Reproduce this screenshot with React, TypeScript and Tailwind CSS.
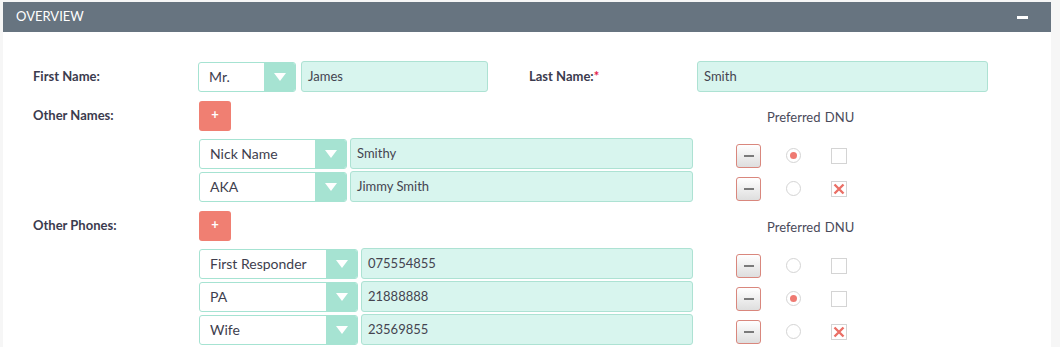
import React from "react";

type Row = { type: string; value: string; preferred: boolean; dnu: boolean };

const names: Row[] = [
  { type: "Nick Name", value: "Smithy", preferred: true, dnu: false },
  { type: "AKA", value: "Jimmy Smith", preferred: false, dnu: true },
];

const phones: Row[] = [
  { type: "First Responder", value: "075554855", preferred: false, dnu: false },
  { type: "PA", value: "21888888", preferred: true, dnu: false },
  { type: "Wife", value: "23569855", preferred: false, dnu: true },
];

function Select({ value, width }: { value: string; width: string }) {
  return (
    <div
      className={`flex h-[30px] ${width} shrink-0 overflow-hidden rounded-[3px] border border-[#a6e3d2] bg-white`}
    >
      <div className="flex flex-1 items-center pl-[10px] text-[14px] text-[#3e3e4e]">
        {value}
      </div>
      <div className="flex w-[31px] items-center justify-center bg-[#a6e3d2]">
        <svg width="12" height="8" viewBox="0 0 12 8">
          <path d="M0 0 L12 0 L6 8 Z" fill="#ffffff" />
        </svg>
      </div>
    </div>
  );
}

function Input({ value, width }: { value: string; width: string }) {
  return (
    <div
      className={`flex h-[31px] ${width} shrink-0 items-center rounded-[3px] border border-[#ade2d3] bg-[#d8f5ee] pl-[6px] text-[13px] text-[#444450]`}
    >
      {value}
    </div>
  );
}

function MinusButton() {
  return (
    <div className="flex h-[24px] w-[25px] items-center justify-center rounded-[3px] border border-[#d9877d] bg-gradient-to-b from-white to-[#dedede]">
      <div className="h-[2px] w-[10px] bg-[#7a7a7a]" />
    </div>
  );
}

function Radio({ checked }: { checked: boolean }) {
  return (
    <div className="flex h-[15px] w-[15px] items-center justify-center rounded-full border border-[#d4d4d4] bg-white">
      {checked && <div className="h-[7px] w-[7px] rounded-full bg-[#ef7a72]" />}
    </div>
  );
}

function Checkbox({ checked }: { checked: boolean }) {
  return (
    <div className="flex h-[16px] w-[16px] items-center justify-center border border-[#d4d4d4] bg-white">
      {checked && (
        <svg width="12" height="12" viewBox="0 0 12 12">
          <path
            d="M1.5 1.5 L10.5 10.5 M10.5 1.5 L1.5 10.5"
            stroke="#ea6f66"
            strokeWidth="2.4"
          />
        </svg>
      )}
    </div>
  );
}

function PlusButton() {
  return (
    <div className="flex h-[30px] w-[32px] items-center justify-center rounded-[3px] bg-[#f07f72] pb-[3px] text-[13px] font-bold text-white">
      +
    </div>
  );
}

function MultiSection({
  label,
  rows,
  selectWidth,
  inputWidth,
  className,
}: {
  label: string;
  rows: Row[];
  selectWidth: string;
  inputWidth: string;
  className?: string;
}) {
  return (
    <div className={className}>
      <div className="flex h-[30px] items-center">
        <div className="w-[166px] shrink-0 text-[13px] font-bold text-[#3b3b4e]">
          {label}
        </div>
        <PlusButton />
        <div className="ml-[536px] pt-[3px] text-[13px] text-[#4a4a5a]">
          Preferred <span className="ml-[1px]">DNU</span>
        </div>
      </div>
      <div className="mt-[7px] flex flex-col gap-[2px]">
        {rows.map((row) => (
          <div key={row.type} className="flex items-center pl-[166px]">
            <Select value={row.type} width={selectWidth} />
            <div className="ml-[3px]">
              <Input value={row.value} width={inputWidth} />
            </div>
            <div className="ml-[43px] mt-[4px] flex items-center">
              <MinusButton />
              <div className="ml-[25px]">
                <Radio checked={row.preferred} />
              </div>
              <div className="ml-[30px]">
                <Checkbox checked={row.dnu} />
              </div>
            </div>
          </div>
        ))}
      </div>
    </div>
  );
}

export default function App() {
  return (
    <div
      className="h-[347px] w-[1060px] overflow-hidden bg-[#f6f6f6] pt-[2px] pl-[3px]"
      style={{ fontFamily: "Lato, 'Noto Sans', sans-serif" }}
    >
      <div className="h-full w-[1048px] bg-white">
        {/* Header */}
        <div className="flex h-[30px] items-center justify-between bg-[#677480] pl-[13px] pr-[23px]">
          <span className="text-[13px] text-white">OVERVIEW</span>
          <div className="h-[3px] w-[11px] bg-white" />
        </div>

        <div className="pl-[30px] pt-[29px]">
          {/* First / Last name */}
          <div className="flex h-[31px] items-center">
            <div className="w-[165px] shrink-0 text-[13px] font-bold text-[#3b3b4e]">
              First Name:
            </div>
            <Select value="Mr." width="w-[98px]" />
            <div className="ml-[5px]">
              <Input value="James" width="w-[187px]" />
            </div>
            <div className="ml-[41px] w-[168px] shrink-0 text-[13px] font-bold text-[#3b3b4e]">
              Last Name:<span className="text-[#e3204d]">*</span>
            </div>
            <Input value="Smith" width="w-[291px]" />
          </div>

          <MultiSection
            className="mt-[9px]"
            label="Other Names:"
            rows={names}
            selectWidth="w-[148px]"
            inputWidth="w-[343px]"
          />

          <MultiSection
            className="mt-[9px]"
            label="Other Phones:"
            rows={phones}
            selectWidth="w-[159px]"
            inputWidth="w-[332px]"
          />
        </div>
      </div>
    </div>
  );
}
